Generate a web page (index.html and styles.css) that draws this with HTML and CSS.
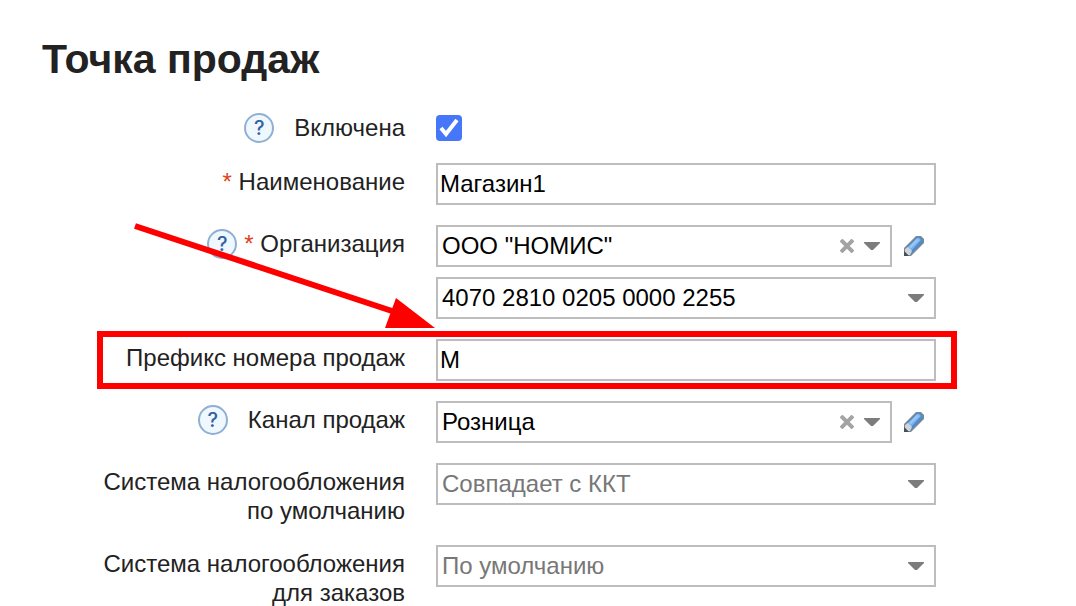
FILE: index.html
```html
<!DOCTYPE html>
<html lang="ru">
<head>
<meta charset="utf-8">
<meta name="viewport" content="width=device-width, initial-scale=1">
<title>Точка продаж</title>
<link rel="stylesheet" href="styles.css">
</head>
<body>
<svg class="sprite" aria-hidden="true">
  <symbol id="arrow" viewBox="0 0 16 8"><path d="M0 0H16V1L9 8H7L0 1Z" fill="#7c7c7c"/></symbol>
  <symbol id="cross" viewBox="0 0 14 14"><path d="M1 1L13 13M13 1L1 13" stroke="#a3a3a3" stroke-width="4"/></symbol>
  <symbol id="pencil" viewBox="0 0 20 20">
    <path d="M0 12L12 0H17L20 3V7L7 20H0Z" fill="#7b8894"/>
    <path d="M1 13L13 1H16L19 4V6L7 18Z" fill="#4f8ccb"/>
    <path d="M3 12L13 2H15L17 4L7 15Z" fill="#7db4ec"/>
    <path d="M5 11L13 3L15 4L7 12Z" fill="#9cc8f5"/>
    <path d="M1 13L4 11L8 15L6 19H4L1 16Z" fill="#ccd5dd"/>
    <path d="M0 15L5 20H0Z" fill="#46505a"/>
  </symbol>
</svg>
<main class="page">
  <h1 class="title">Точка продаж</h1>
  <form class="form">
    <div class="row row-check">
      <div class="caption caption-check">
        <button type="button" class="help" aria-label="Справка: Включена">?</button>
        <label for="enabled">Включена</label>
      </div>
      <input class="check" type="checkbox" id="enabled" checked>
    </div>

    <div class="row">
      <div class="caption"><label for="name"><span class="star">*</span> Наименование</label></div>
      <input class="control text" type="text" id="name" value="Магазин1">
    </div>

    <div class="row">
      <div class="caption caption-required">
        <button type="button" class="help" aria-label="Справка: Организация">?</button>
        <label for="org"><span class="star">*</span> Организация</label>
      </div>
      <div class="fields">
        <div class="line">
          <div class="combo">
            <select class="control" id="org"><option>ООО "НОМИС"</option></select>
            <button type="button" class="clear" aria-label="Очистить"><svg class="cross"><use href="#cross"/></svg></button>
            <svg class="arrow"><use href="#arrow"/></svg>
          </div>
          <button type="button" class="edit" aria-label="Изменить"><svg class="pencil"><use href="#pencil"/></svg></button>
        </div>
        <div class="combo">
          <select class="control" aria-label="Расчётный счёт"><option>4070 2810 0205 0000 2255</option></select>
          <svg class="arrow"><use href="#arrow"/></svg>
        </div>
      </div>
    </div>

    <div class="row row-marked">
      <div class="caption"><label for="prefix">Префикс номера продаж</label></div>
      <input class="control text" type="text" id="prefix" value="М">
      <svg class="pointer" viewBox="0 0 302 108" aria-hidden="true">
        <path d="M1 5L258 90" stroke="#f00" stroke-width="6"/>
        <path d="M262 77L301 107L251 107Z" fill="#f00"/>
      </svg>
    </div>

    <div class="row">
      <div class="caption">
        <button type="button" class="help" aria-label="Справка: Канал продаж">?</button>
        <label for="channel">Канал продаж</label>
      </div>
      <div class="line">
        <div class="combo">
          <select class="control" id="channel"><option>Розница</option></select>
          <button type="button" class="clear" aria-label="Очистить"><svg class="cross"><use href="#cross"/></svg></button>
          <svg class="arrow"><use href="#arrow"/></svg>
        </div>
        <button type="button" class="edit" aria-label="Изменить"><svg class="pencil"><use href="#pencil"/></svg></button>
      </div>
    </div>

    <div class="row">
      <div class="caption"><label for="tax">Система налогообложения<br>по умолчанию</label></div>
      <div class="combo">
        <select class="control muted" id="tax"><option>Совпадает с ККТ</option></select>
        <svg class="arrow"><use href="#arrow"/></svg>
      </div>
    </div>

    <div class="row">
      <div class="caption"><label for="tax-orders">Система налогообложения<br>для заказов</label></div>
      <div class="combo">
        <select class="control muted" id="tax-orders"><option>По умолчанию</option></select>
        <svg class="arrow"><use href="#arrow"/></svg>
      </div>
    </div>
  </form>
</main>
</body>
</html>
```
FILE: styles.css
```css
* { box-sizing: border-box; }

body {
  margin: 0;
  background: #fff;
  color: #222;
  font: 24px/29px "Liberation Sans", Arial, sans-serif;
}

button {
  padding: 0;
  border: 0;
  background: none;
  cursor: pointer;
}

svg { display: block; }

.sprite {
  position: absolute;
  width: 0;
  height: 0;
}

.page { padding: 35px 140px 0 42px; }

.title {
  margin: 0 0 30px;
  font-size: 41px;
  line-height: 48px;
}

.form {
  display: flex;
  flex-direction: column;
  gap: 20px;
}

.row {
  display: grid;
  grid-template-columns: 363px 1fr;
  column-gap: 31px;
  align-items: start;
}

.row-check { align-items: center; }

.caption {
  display: flex;
  justify-content: flex-end;
  gap: 20px;
  padding-top: 4px;
  text-align: right;
  white-space: nowrap;
}

.caption-check { padding-top: 0; }
.caption-required { gap: 7px; }

.star { color: #e0401c; }

.help {
  flex: none;
  width: 30px;
  height: 30px;
  border: 2px solid #8fb0d2;
  border-radius: 50%;
  background: #eff7ff;
  color: #3262a0;
  font: 500 20px/26px Inter, sans-serif;
}

.check {
  appearance: none;
  width: 26px;
  height: 26px;
  margin: 0;
  border-radius: 4px;
  background: #4677f8 url("data:image/svg+xml,%3Csvg xmlns='http://www.w3.org/2000/svg' viewBox='0 0 26 26'%3E%3Cpath d='M5 13L10 19L21 5' fill='none' stroke='white' stroke-width='4'/%3E%3C/svg%3E");
}

.check:not(:checked) {
  border: 2px solid #bbb;
  background: #fff;
}

.control {
  display: block;
  width: 100%;
  min-width: 0;
  height: 42px;
  margin: 0;
  padding: 0 4px 2px;
  border: 2px solid #bdbdbd;
  border-radius: 0;
  background: #fff;
  color: #000;
  font: inherit;
  appearance: none;
}

.text { padding: 0 2px; }
.control.muted { color: #777; }

.fields {
  display: grid;
  gap: 10px;
}

.line {
  display: flex;
  align-items: center;
  gap: 12px;
}

.combo {
  position: relative;
  flex: 1;
}

.arrow {
  position: absolute;
  top: 17px;
  right: 12px;
  width: 16px;
  height: 8px;
  pointer-events: none;
}

.clear {
  position: absolute;
  top: 14px;
  right: 38px;
}

.cross {
  width: 14px;
  height: 14px;
}

.edit { padding-right: 12px; }

.pencil {
  width: 20px;
  height: 20px;
}

.row-marked { position: relative; }

.row-marked::after {
  content: "";
  position: absolute;
  inset: -8px -21px -8px 55px;
  border: 6px solid #f00;
  pointer-events: none;
}

.pointer {
  position: absolute;
  bottom: 52px;
  left: 92px;
  width: 302px;
  height: 108px;
  pointer-events: none;
}
```
